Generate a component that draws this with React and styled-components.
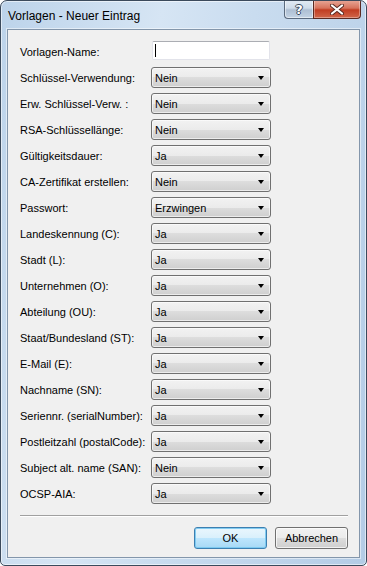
import React from "react";
import styled, { createGlobalStyle } from "styled-components";

const GlobalStyle = createGlobalStyle`
  html, body {
    margin: 0;
    padding: 0;
    background: #ffffff;
  }
  body {
    font-family: "Liberation Sans", Arial, sans-serif;
  }
`;

const fields = [
  { label: "Schlüssel-Verwendung:", value: "Nein" },
  { label: "Erw. Schlüssel-Verw. :", value: "Nein" },
  { label: "RSA-Schlüssellänge:", value: "Nein" },
  { label: "Gültigkeitsdauer:", value: "Ja" },
  { label: "CA-Zertifikat erstellen:", value: "Nein" },
  { label: "Passwort:", value: "Erzwingen" },
  { label: "Landeskennung (C):", value: "Ja" },
  { label: "Stadt (L):", value: "Ja" },
  { label: "Unternehmen (O):", value: "Ja" },
  { label: "Abteilung (OU):", value: "Ja" },
  { label: "Staat/Bundesland (ST):", value: "Ja" },
  { label: "E-Mail (E):", value: "Ja" },
  { label: "Nachname (SN):", value: "Ja" },
  { label: "Seriennr. (serialNumber):", value: "Ja" },
  { label: "Postleitzahl (postalCode):", value: "Ja" },
  { label: "Subject alt. name (SAN):", value: "Nein" },
  { label: "OCSP-AIA:", value: "Ja" },
];

const App = () => {
  return (
    <>
      <GlobalStyle />
      <Window>
        <TitleBar>
          <Title>Vorlagen - Neuer Eintrag</Title>
          <Caption>
            <HelpButton>
              <Glyph>?</Glyph>
            </HelpButton>
            <CloseButton>
              <svg width="14" height="11" viewBox="0 0 14 11">
                <path
                  d="M2 1.5 L12 9.5 M12 1.5 L2 9.5"
                  stroke="#5a2a22"
                  strokeWidth="4"
                  strokeLinecap="round"
                />
                <path
                  d="M2 1.5 L12 9.5 M12 1.5 L2 9.5"
                  stroke="#ffffff"
                  strokeWidth="2.2"
                  strokeLinecap="round"
                />
              </svg>
            </CloseButton>
          </Caption>
        </TitleBar>
        <Client>
          <Form>
            <Row>
              <Label>Vorlagen-Name:</Label>
              <TextBox>
                <Caret />
              </TextBox>
            </Row>
            {fields.map((f) => (
              <Row key={f.label}>
                <Label>{f.label}</Label>
                <Combo>
                  <span>{f.value}</span>
                  <Arrow />
                </Combo>
              </Row>
            ))}
          </Form>
          <Separator />
          <Buttons>
            <Button $primary>OK</Button>
            <Button>Abbrechen</Button>
          </Buttons>
        </Client>
      </Window>
    </>
  );
};

const Window = styled.div`
  width: 367px;
  height: 566px;
  box-sizing: border-box;
  font-family: "Liberation Sans", Arial, Helvetica, sans-serif;
  border: 1px solid #3b4a5c;
  border-radius: 7px 7px 5px 5px;
  background: linear-gradient(
    100deg,
    #bcd3ea 0%,
    #d6e5f4 35%,
    #c9dcef 55%,
    #b4cce6 100%
  );
  display: flex;
  flex-direction: column;
  overflow: hidden;
  box-shadow: inset 0 0 0 1px rgba(255, 255, 255, 0.55);
`;

const TitleBar = styled.div`
  height: 28px;
  flex: none;
  display: flex;
  justify-content: space-between;
  align-items: flex-start;
  padding: 0 5px 0 7px;
`;

const Title = styled.div`
  font-family: "Liberation Sans", Arial, sans-serif;
  font-size: 12px;
  color: #000;
  margin-top: 8px;
`;

const Caption = styled.div`
  display: flex;
  margin-top: -1px;
`;

const CapButton = styled.div`
  height: 19px;
  box-sizing: border-box;
  display: flex;
  align-items: center;
  justify-content: center;
  border: 1px solid #5a6a7e;
  border-top: none;
`;

const HelpButton = styled(CapButton)`
  width: 29px;
  border-right: none;
  border-radius: 0 0 0 4px;
  background: linear-gradient(#e3ebf4 0%, #cfdcea 45%, #aebfd3 55%, #c3d3e4 100%);
  box-shadow: inset 0 0 0 1px rgba(255, 255, 255, 0.5);
`;

const Glyph = styled.span`
  font-family: "DejaVu Sans", sans-serif;
  font-weight: bold;
  font-size: 13px;
  line-height: 1;
  color: #ffffff;
  margin-top: 1px;
  text-shadow: 1px 0 0 #3a4a5e, -1px 0 0 #3a4a5e, 0 1px 0 #3a4a5e, 0 -1px 0 #3a4a5e;
`;

const CloseButton = styled(CapButton)`
  width: 48px;
  border-color: #5b2a22;
  border-radius: 0 0 4px 0;
  background: linear-gradient(#e9a99a 0%, #d7735c 45%, #c13d22 55%, #d0664a 100%);
  box-shadow: inset 0 0 0 1px rgba(255, 255, 255, 0.35);
`;

const Client = styled.div`
  flex: 1;
  margin: 0 6px 7px 6px;
  background: #f0f0f0;
  border: 1px solid #8396ab;
  outline: 1px solid rgba(255, 255, 255, 0.5);
  display: flex;
  flex-direction: column;
  padding: 11px 11px 0 12px;
`;

const Form = styled.div`
  display: flex;
  flex-direction: column;
  gap: 5px;
`;

const Row = styled.div`
  display: grid;
  grid-template-columns: 131px 120px;
  align-items: center;
  height: 21px;
`;

const Label = styled.div`
  font-family: "Liberation Sans", Arial, sans-serif;
  font-size: 11px;
  color: #000;
  white-space: nowrap;
`;

const TextBox = styled.div`
  align-self: start;
  margin-left: 1px;
  width: 118px;
  height: 19px;
  box-sizing: border-box;
  background: #ffffff;
  border: 1px solid #e2e3ea;
  border-top-color: #abadb3;
  border-radius: 2px;
  display: flex;
  align-items: center;
  padding-left: 2px;
`;

const Caret = styled.span`
  width: 1px;
  height: 13px;
  background: #000;
`;

const Combo = styled.div`
  height: 21px;
  box-sizing: border-box;
  border: 1px solid #707070;
  border-radius: 3px;
  background: linear-gradient(#f2f2f2 0%, #ebebeb 50%, #dddddd 50%, #cfcfcf 100%);
  box-shadow: inset 0 0 0 1px rgba(255, 255, 255, 0.6);
  display: flex;
  align-items: center;
  justify-content: space-between;
  padding: 0 6px 0 3px;
  font-family: "Liberation Sans", Arial, sans-serif;
  font-size: 11px;
  color: #000;
`;

const Arrow = styled.span`
  width: 0;
  height: 0;
  border-left: 3.5px solid transparent;
  border-right: 3.5px solid transparent;
  border-top: 4px solid #000;
`;

const Separator = styled.div`
  height: 0;
  border-top: 1px solid #a0a0a0;
  border-bottom: 1px solid #ffffff;
  margin-top: 11px;
`;

const Buttons = styled.div`
  display: flex;
  justify-content: flex-end;
  gap: 8px;
  margin-top: 10px;
`;

const Button = styled.div`
  width: 73px;
  height: 22px;
  box-sizing: border-box;
  border-radius: 3px;
  display: flex;
  align-items: center;
  justify-content: center;
  font-family: "Liberation Sans", Arial, sans-serif;
  font-size: 11px;
  color: #000;
  border: 1px solid ${(p) => (p.$primary ? "#3c7fb1" : "#707070")};
  background: ${(p) =>
    p.$primary
      ? "linear-gradient(#eaf6fd 0%, #d9f0fc 50%, #bee6fd 50%, #a7d9f5 100%)"
      : "linear-gradient(#f2f2f2 0%, #ebebeb 50%, #dddddd 50%, #cfcfcf 100%)"};
  box-shadow: inset 0 0 0 1px
    ${(p) => (p.$primary ? "rgba(120, 200, 240, 0.9)" : "rgba(255, 255, 255, 0.7)")};
`;

export default App;
